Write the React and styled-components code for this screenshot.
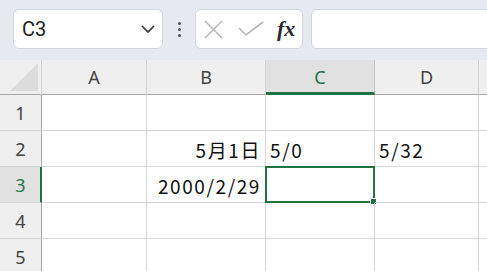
import React from 'react';
import styled, {createGlobalStyle} from 'styled-components';

const GlobalStyle = createGlobalStyle`
    html, body {
        margin: 0;
        padding: 0;
        background: #ffffff;
        overflow: hidden;
    }
    * {
        box-sizing: border-box;
    }
`;

const GREEN = '#217346';

const columns = [
    {name: 'A', width: 105},
    {name: 'B', width: 119},
    {name: 'C', width: 109},
    {name: 'D', width: 104},
    {name: '', width: 60},
];

const rows = [
    ['', '', '', '', ''],
    ['', '5月1日', '5/0', '5/32', ''],
    ['', '2000/2/29', '', '', ''],
    ['', '', '', '', ''],
    ['', '', '', '', ''],
];

// numbers and dates sit on the right, text on the left
const rightAligned = {'1,1': true, '2,1': true};

const selected = {row: 2, col: 2};

const Page = styled.div`
    width: 487px;
    height: 271px;
    overflow: hidden;
    font-family: "Noto Sans CJK JP", "Noto Sans", sans-serif;
`;

const Toolbar = styled.div`
    height: 60px;
    background: #e6e9f0;
    display: flex;
    align-items: center;
    padding: 0 0 2px 13px;
    gap: 8px;
    white-space: nowrap;
`;

const Box = styled.div`
    height: 40px;
    background: #ffffff;
    border: 1px solid #d3d6dd;
    border-radius: 6px;
    display: flex;
    align-items: center;
    flex: none;
    width: ${p => p.$w}px;
`;

const NameBox = styled(Box)`
    padding: 0 6px 0 8px;
    justify-content: space-between;
    font-family: Roboto, "Noto Sans", sans-serif;
    font-size: 20px;
    color: #222;
`;

const Dots = styled.div`
    flex: none;
    width: 16px;
    height: 40px;
    display: flex;
    flex-direction: column;
    align-items: center;
    justify-content: center;
    gap: 3px;
    span {
        width: 3px;
        height: 3px;
        border-radius: 50%;
        background: #555;
    }
`;

const FxBox = styled(Box)`
    padding: 0 6px 0 8px;
    gap: 15px;
`;

const Fx = styled.span`
    font-family: "Liberation Serif", "DejaVu Serif", serif;
    font-style: italic;
    font-weight: bold;
    font-size: 22px;
    color: #2b2b2b;
    margin-left: -2px;
`;

const Sheet = styled.div`
    display: grid;
    grid-template-columns: 42px ${columns.map(c => c.width + 'px').join(' ')};
    grid-auto-rows: 36px;
    grid-template-rows: 35px;
`;

const Corner = styled.div`
    background: #efefef;
    border-right: 1px solid #d4d4d4;
    border-bottom: 1px solid #a8a8a8;
    display: flex;
    align-items: flex-end;
    justify-content: flex-end;
    padding: 0 3px 3px 0;
`;

const ColHead = styled.div`
    background: ${p => p.$active ? '#e1e1e1' : '#efefef'};
    border-right: 1px solid ${p => p.$active ? '#c2c2c2' : '#d4d4d4'};
    border-bottom: ${p => p.$active ? `3px solid ${GREEN}` : '1px solid #a8a8a8'};
    color: ${p => p.$active ? GREEN : '#444'};
    font-family: "Noto Sans", sans-serif;
    font-size: 18px;
    display: flex;
    align-items: center;
    justify-content: center;
    padding-top: ${p => p.$active ? 2 : 0}px;
`;

const RowHead = styled.div`
    background: ${p => p.$active ? '#e1e1e1' : '#efefef'};
    border-right: ${p => p.$active ? `2px solid ${GREEN}` : '1px solid #a8a8a8'};
    border-bottom: 1px solid #d4d4d4;
    color: ${p => p.$active ? GREEN : '#444'};
    font-family: "Noto Sans", sans-serif;
    font-size: 18px;
    display: flex;
    align-items: center;
    justify-content: center;
    padding-left: ${p => p.$active ? 1 : 0}px;
`;

const Cell = styled.div`
    position: relative;
    border-right: 1px solid #d9d9d9;
    border-bottom: 1px solid #d9d9d9;
    display: flex;
    align-items: center;
    justify-content: ${p => p.$right ? 'flex-end' : 'flex-start'};
    padding: 2px 4px 0 4px;
    font-size: 19px;
    letter-spacing: 1.6px;
    color: #111;
    white-space: nowrap;
`;

const Selection = styled.div`
    position: absolute;
    left: -1px;
    top: -1px;
    right: -1px;
    bottom: -1px;
    border: 2px solid ${GREEN};
    pointer-events: none;
`;

const Handle = styled.div`
    position: absolute;
    right: -4px;
    bottom: -4px;
    width: 7px;
    height: 7px;
    background: ${GREEN};
    border: 1px solid #fff;
`;

const Chevron = () => (
    <svg width="16" height="10" viewBox="0 0 16 10">
        <path d="M2 2 L8 8 L14 2" fill="none" stroke="#333" strokeWidth="1.6"/>
    </svg>
);

const Cross = () => (
    <svg width="19" height="19" viewBox="0 0 19 19">
        <path d="M1 1 L18 18 M18 1 L1 18" stroke="#b9b9b9" strokeWidth="1.6"/>
    </svg>
);

const Check = () => (
    <svg width="26" height="16" viewBox="0 0 26 16">
        <path d="M1 7 L8 14 L25 1" fill="none" stroke="#b9b9b9" strokeWidth="1.6"/>
    </svg>
);

const CornerMark = () => (
    <svg width="28" height="28" viewBox="0 0 28 28">
        <polygon points="28,0 28,28 0,28" fill="#dcdcdc"/>
    </svg>
);

export default function App() {
    return (
        <Page>
            <GlobalStyle/>
            <Toolbar>
                <NameBox $w={150}>
                    <span>C3</span>
                    <Chevron/>
                </NameBox>
                <Dots><span/><span/><span/></Dots>
                <FxBox $w={108}>
                    <Cross/>
                    <Check/>
                    <Fx>fx</Fx>
                </FxBox>
                <Box $w={200}/>
            </Toolbar>
            <Sheet>
                <Corner><CornerMark/></Corner>
                {columns.map((c, i) => (
                    <ColHead key={i} $active={i === selected.col}>{c.name}</ColHead>
                ))}
                {rows.map((r, ri) => (
                    <React.Fragment key={ri}>
                        <RowHead $active={ri === selected.row}>{ri + 1}</RowHead>
                        {r.map((v, ci) => (
                            <Cell key={ci} $right={rightAligned[ri + ',' + ci]}>
                                {v}
                                {ri === selected.row && ci === selected.col && (
                                    <Selection><Handle/></Selection>
                                )}
                            </Cell>
                        ))}
                    </React.Fragment>
                ))}
            </Sheet>
        </Page>
    );
}
